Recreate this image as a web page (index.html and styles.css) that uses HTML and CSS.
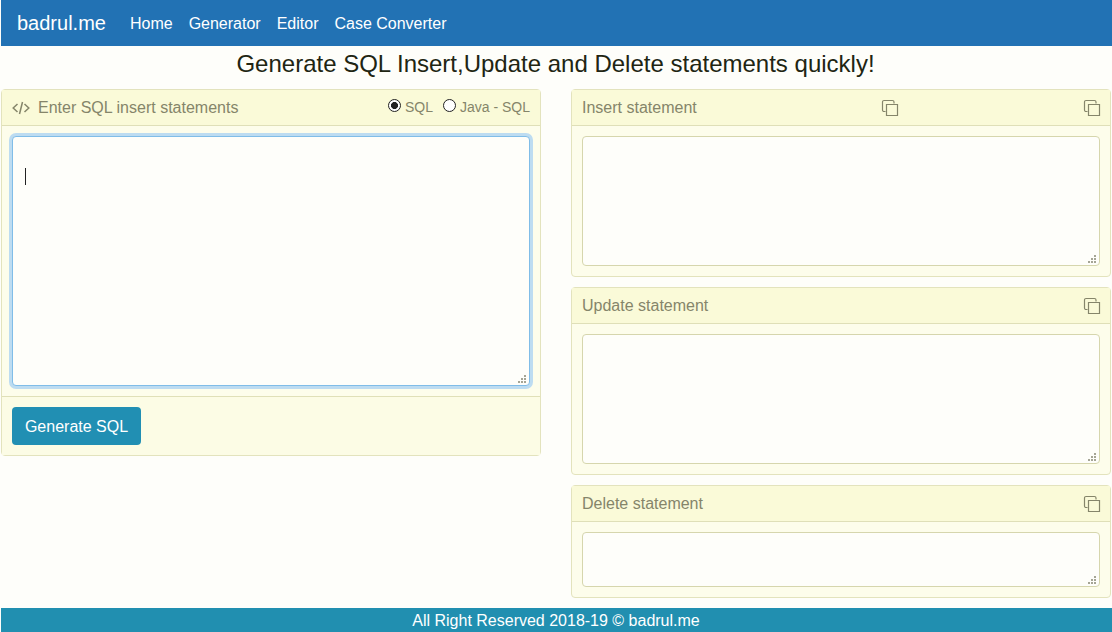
FILE: index.html
```html
<!DOCTYPE html>
<html lang="en">
<head>
<meta charset="utf-8">
<title>badrul.me</title>
<link rel="stylesheet" href="styles.css">
</head>
<body>
<svg class="defs" width="0" height="0"><symbol id="copy" viewBox="0 0 18 18"><path d="M4.500 12.500H3A1.500 1.500 0 0 1 1.500 11V3A1.500 1.500 0 0 1 3 1.500H11.500A1.500 1.500 0 0 1 13 3V4.500M5.500 5.500H16.500V16.500H5.500Z" fill="none" stroke="currentColor" stroke-width="1.200"/></symbol></svg>
<nav class="navbar"><a class="brand">badrul.me</a><a>Home</a><a>Generator</a><a>Editor</a><a>Case Converter</a></nav>
<h1>Generate SQL Insert,Update and Delete statements quickly!</h1>
<main class="columns">
  <section class="card">
    <header class="head">
      <svg class="code" viewBox="0 0 18 14"><path d="M5.500 3L1.200 7L5.500 11M12.500 3L16.800 7L12.500 11M10.500 1L7.500 13" fill="none" stroke="currentColor" stroke-width="1.500"/></svg>
      <span>Enter SQL insert statements</span>
      <div class="options"><i class="radio on"></i><span>SQL</span><i class="radio second"></i><span>Java - SQL</span></div>
    </header>
    <div class="body"><div class="field query"><span class="caret"></span><svg class="grip" viewBox="0 0 8 8"><path d="M6 0h2v2H6zM3 3h2v2H3zM6 3h2v2H6zM0 6h2v2H0zM3 6h2v2H3zM6 6h2v2H6z"/></svg></div></div>
    <footer class="actions"><button>Generate SQL</button></footer>
  </section>
  <div class="results">
    <section class="card">
      <header class="head"><span>Insert statement</span><svg class="copy middle"><use href="#copy"/></svg><svg class="copy"><use href="#copy"/></svg></header>
      <div class="body"><div class="field"><svg class="grip" viewBox="0 0 8 8"><path d="M6 0h2v2H6zM3 3h2v2H3zM6 3h2v2H6zM0 6h2v2H0zM3 6h2v2H3zM6 6h2v2H6z"/></svg></div></div>
    </section>
    <section class="card">
      <header class="head"><span>Update statement</span><svg class="copy end"><use href="#copy"/></svg></header>
      <div class="body"><div class="field"><svg class="grip" viewBox="0 0 8 8"><path d="M6 0h2v2H6zM3 3h2v2H3zM6 3h2v2H6zM0 6h2v2H0zM3 6h2v2H3zM6 6h2v2H6z"/></svg></div></div>
    </section>
    <section class="card">
      <header class="head"><span>Delete statement</span><svg class="copy end"><use href="#copy"/></svg></header>
      <div class="body"><div class="field short"><svg class="grip" viewBox="0 0 8 8"><path d="M6 0h2v2H6zM3 3h2v2H3zM6 3h2v2H6zM0 6h2v2H0zM3 6h2v2H3zM6 6h2v2H6z"/></svg></div></div>
    </section>
  </div>
</main>
<footer class="copyright">All Right Reserved 2018-19 © badrul.me</footer>
</body>
</html>
```
FILE: styles.css
```css
*{box-sizing:border-box}
body{margin:0;padding-left:1px;height:632px;overflow:hidden;display:flex;flex-direction:column;background:#fefefa;font:16px/24px "Liberation Sans",Arial,sans-serif;color:#212529}
.defs{position:absolute}
.navbar{height:46px;flex:none;padding:1px 0 0 16px;display:flex;align-items:center;gap:16px;background:#2272b4;color:#fff}
.brand{font-size:20px;margin-right:8px;padding-bottom:1px}
h1{margin:0;height:43px;padding:4px 2px 0 0;font-size:24px;line-height:28px;font-weight:400;text-align:center;color:#212512}
.columns{flex:1;display:grid;grid-template-columns:540px 540px;gap:30px;align-items:start}
.results{display:flex;flex-direction:column;gap:10px}
.card{border:1px solid #e3e3bd;border-radius:4px;background:#fdfdeb}
.head{height:36px;padding:0 9px 0 10px;display:flex;align-items:center;background:#fafad8;border-bottom:1px solid #dfdfb8;color:#85856a}
.code{width:18px;height:14px;margin-right:8px}
.options{display:flex;align-items:center;margin:-1px 1px 0 auto;font-size:14px;line-height:22px}
.radio{width:13px;height:13px;margin:-3px 4px 0 0;border:1px solid #222;border-radius:50%;background:#fff}
.radio.on{background:radial-gradient(circle,#222 0 3.200px,#fff 3.800px)}
.radio.second{margin-left:10px;margin-right:4px}
.copy{width:18px;height:18px}
.middle{margin:0 184px 0 auto}
.end{margin-left:auto}
.body{padding:10px}
.field{position:relative;height:130px;border:1px solid #d6d6ad;border-radius:4px;background:#fefefa}
.query{height:250px;padding:31px 12px;border-color:#80bde8;box-shadow:0 0 0 3px #bddcf1}
.short{height:55px}
.caret{display:block;width:1px;height:17px;background:#222}
.grip{position:absolute;right:3px;bottom:2px;width:8px;height:8px;fill:#a5a595}
.actions{height:59px;padding:10px;border-top:1px solid #e0e0b8;background:#fcfce5}
button{display:block;width:129px;height:38px;padding:2px 0 0;border:0;border-radius:4px;background:#218fb3;color:#fff;font:inherit}
.copyright{height:24px;flex:none;padding-right:1px;line-height:26px;background:#218fb0;color:#fff;text-align:center}
```
